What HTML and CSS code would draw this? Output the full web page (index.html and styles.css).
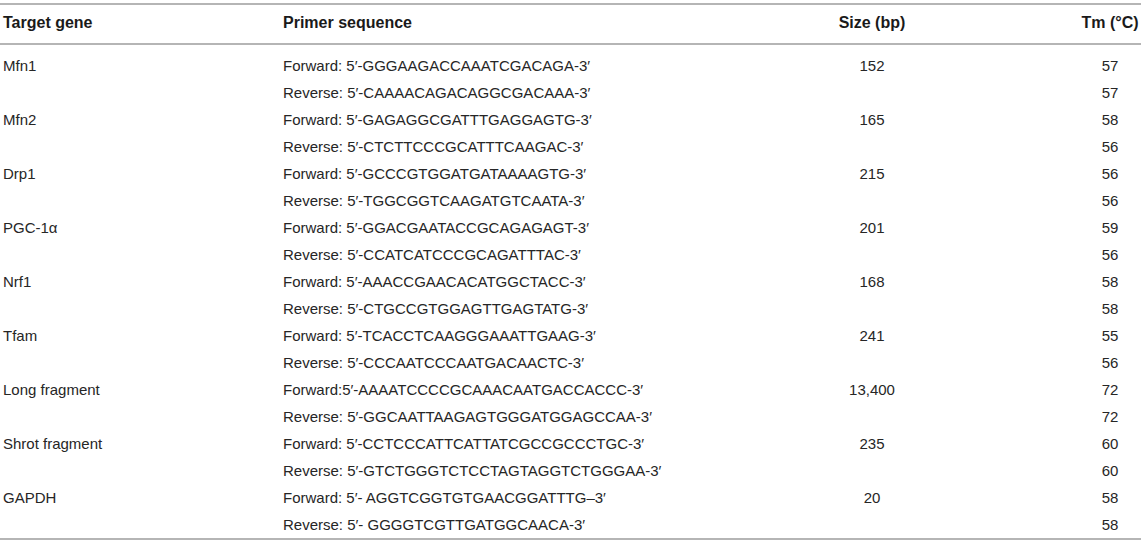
FILE: index.html
```html
<!DOCTYPE html>
<html>
<head>
<meta charset="utf-8">
<link rel="stylesheet" href="styles.css">
</head>
<body>
<table class="primers">
  <colgroup>
    <col class="c-gene">
    <col class="c-seq">
    <col class="c-size">
    <col class="c-tm">
  </colgroup>
  <thead>
    <tr>
      <th class="left">Target gene</th>
      <th class="left">Primer sequence</th>
      <th class="center">Size (bp)</th>
      <th class="center tm">Tm (°C)</th>
    </tr>
  </thead>
  <tbody>
    <tr class="first"><td>Mfn1</td><td>Forward: 5′-GGGAAGACCAAATCGACAGA-3′</td><td class="center">152</td><td class="center tm">57</td></tr>
    <tr><td></td><td>Reverse: 5′-CAAAACAGACAGGCGACAAA-3′</td><td class="center"></td><td class="center tm">57</td></tr>
    <tr><td>Mfn2</td><td>Forward: 5′-GAGAGGCGATTTGAGGAGTG-3′</td><td class="center">165</td><td class="center tm">58</td></tr>
    <tr><td></td><td>Reverse: 5′-CTCTTCCCGCATTTCAAGAC-3′</td><td class="center"></td><td class="center tm">56</td></tr>
    <tr><td>Drp1</td><td>Forward: 5′-GCCCGTGGATGATAAAAGTG-3′</td><td class="center">215</td><td class="center tm">56</td></tr>
    <tr><td></td><td>Reverse: 5′-TGGCGGTCAAGATGTCAATA-3′</td><td class="center"></td><td class="center tm">56</td></tr>
    <tr><td>PGC-1α</td><td>Forward: 5′-GGACGAATACCGCAGAGAGT-3′</td><td class="center">201</td><td class="center tm">59</td></tr>
    <tr><td></td><td>Reverse: 5′-CCATCATCCCGCAGATTTAC-3′</td><td class="center"></td><td class="center tm">56</td></tr>
    <tr><td>Nrf1</td><td>Forward: 5′-AAACCGAACACATGGCTACC-3′</td><td class="center">168</td><td class="center tm">58</td></tr>
    <tr><td></td><td>Reverse: 5′-CTGCCGTGGAGTTGAGTATG-3′</td><td class="center"></td><td class="center tm">58</td></tr>
    <tr><td>Tfam</td><td>Forward: 5′-TCACCTCAAGGGAAATTGAAG-3′</td><td class="center">241</td><td class="center tm">55</td></tr>
    <tr><td></td><td>Reverse: 5′-CCCAATCCCAATGACAACTC-3′</td><td class="center"></td><td class="center tm">56</td></tr>
    <tr><td>Long fragment</td><td>Forward:5′-AAAATCCCCGCAAACAATGACCACCC-3′</td><td class="center">13,400</td><td class="center tm">72</td></tr>
    <tr><td></td><td>Reverse: 5′-GGCAATTAAGAGTGGGATGGAGCCAA-3′</td><td class="center"></td><td class="center tm">72</td></tr>
    <tr><td>Shrot fragment</td><td>Forward: 5′-CCTCCCATTCATTATCGCCGCCCTGC-3′</td><td class="center">235</td><td class="center tm">60</td></tr>
    <tr><td></td><td>Reverse: 5′-GTCTGGGTCTCCTAGTAGGTCTGGGAA-3′</td><td class="center"></td><td class="center tm">60</td></tr>
    <tr><td>GAPDH</td><td>Forward: 5′- AGGTCGGTGTGAACGGATTTG–3′</td><td class="center">20</td><td class="center tm">58</td></tr>
    <tr><td></td><td>Reverse: 5′- GGGGTCGTTGATGGCAACA-3′</td><td class="center"></td><td class="center tm">58</td></tr>
  </tbody>
</table>
</body>
</html>
```

FILE: styles.css
```css
html, body {
  margin: 0;
  padding: 0;
  background: #ffffff;
}

body {
  padding-top: 3px;
  font-family: "Liberation Sans", Arial, Helvetica, sans-serif;
  color: #262626;
}

.primers {
  width: 1141px;
  border-collapse: collapse;
  table-layout: fixed;
  border-top: 2px solid #b5b5b5;
  border-bottom: 2px solid #b5b5b5;
}

.c-gene { width: 280px; }
.c-seq { width: 385px; }
.c-size { width: 414px; }
.c-tm { width: 62px; }

.primers th {
  font-size: 16px;
  font-weight: bold;
  color: #1a1a1a;
  height: 36px;
  padding: 0 3px 2px;
  border-bottom: 2px solid #b5b5b5;
  white-space: nowrap;
}

.primers td {
  font-size: 15px;
  height: 27px;
  padding: 0 3px;
  white-space: nowrap;
  vertical-align: middle;
}

.primers tr.first td {
  height: 27px;
  padding-top: 7px;
}

.primers th.tm,
.primers td.tm {
  padding-left: 0;
  padding-right: 0;
}

.left { text-align: left; }
.center { text-align: center; }
.primers th.center { text-align: center; }
.primers th.left { text-align: left; }
```
